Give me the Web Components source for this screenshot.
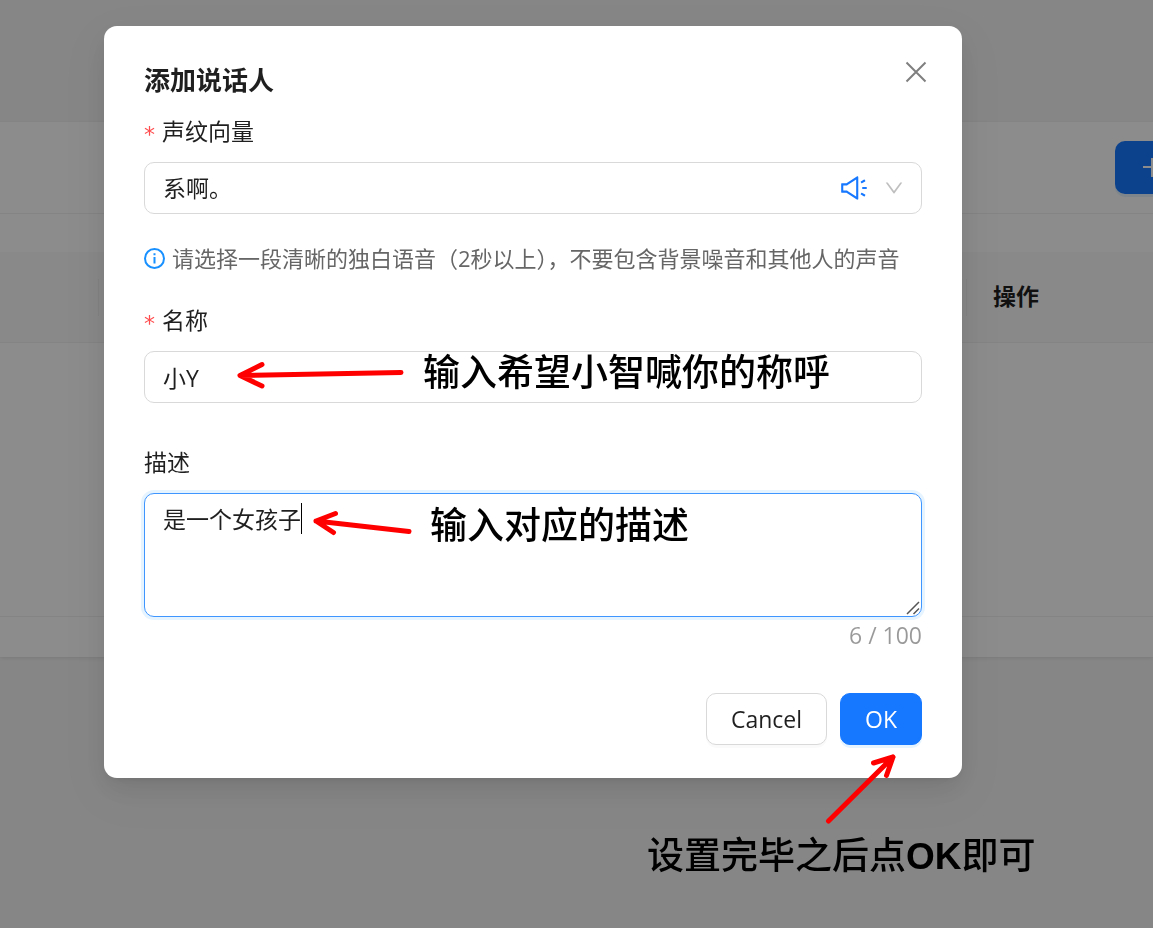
<!DOCTYPE html>
<html lang="zh-CN">
<head>
<meta charset="utf-8">
<meta name="viewport" content="width=device-width, initial-scale=1">
<title>添加说话人</title>
<style>
  html, body {
    height: 100%;
    margin: 0;
  }
  body {
    position: relative;
    overflow: hidden;
    background: #f5f5f5;
    color: rgba(0, 0, 0, 0.88);
    font-family: "Open Sans", "Noto Sans CJK SC", sans-serif;
    font-size: 23px;
    line-height: 36px;
  }
</style>
</head>
<body>
<speaker-page></speaker-page>

<modal-dialog heading="添加说话人">
  <voice-select label="声纹向量" value="系啊。"></voice-select>
  <hint-line>请选择一段清晰的独白语音（2秒以上），不要包含背景噪音和其他人的声音</hint-line>
  <text-field label="名称" value="小Y"></text-field>
  <text-area-field label="描述" value="是一个女孩子" max="100"></text-area-field>
  <action-button slot="footer">Cancel</action-button>
  <action-button slot="footer" primary>OK</action-button>
</modal-dialog>

<note-layer></note-layer>

<script>
const resetStyles = `
  *, *::before, *::after { box-sizing: border-box; }
  button, input, select, textarea {
    margin: 0;
    font: inherit;
    color: inherit;
  }
  svg { display: block; }
`;

const fieldStyles = `
  ${resetStyles}
  :host { display: block; }
  .label {
    display: flex;
    height: 36px;
    margin-bottom: 13px;
  }
  .star {
    width: 18px;
    color: #ff4d4f;
    font-family: "DejaVu Sans", sans-serif;
    font-size: 22px;
    line-height: 44px;
  }
  .box {
    display: flex;
    align-items: center;
    width: 100%;
    height: 52px;
    padding: 0 16px 0 18px;
    border: 1px solid #d9d9d9;
    border-radius: 10px;
    background: #fff;
  }
`;

// page behind the dialog
class SpeakerPage extends HTMLElement {
  constructor() {
    super();
    this.attachShadow({ mode: "open" });
  }

  connectedCallback() {
    this.shadowRoot.innerHTML = `
      <style>
        ${resetStyles}
        :host {
          display: block;
          padding: 122px 0 10px;
          overflow: hidden;
        }
        section {
          padding-bottom: 40px;
          background: #fff;
          box-shadow: 0 2px 4px rgba(0, 0, 0, 0.06), 0 0 2px rgba(0, 0, 0, 0.06);
        }
        header {
          display: flex;
          justify-content: flex-end;
          padding: 19px 0;
          border-bottom: 1px solid #f0f0f0;
        }
        button {
          width: 38px;
          height: 53px;
          padding: 0 0 0 26px;
          border: 0;
          border-radius: 10px 0 0 10px;
          overflow: hidden;
          background: #1677ff;
          color: #fff;
          box-shadow: 0 3px 0 rgba(5, 145, 255, 0.1);
        }
        table {
          width: 100%;
          margin-top: 38px;
          border-collapse: separate;
          border-spacing: 0;
          table-layout: fixed;
        }
        .first { width: 99px; }
        .last { width: 186px; }
        th {
          height: 91px;
          padding: 0 26px 3px;
          border-bottom: 1px solid #f0f0f0;
          background: #fafafa;
          text-align: left;
          font-weight: 700;
        }
        th:not(:last-child) {
          background: linear-gradient(#f0f0f0, #f0f0f0) right center / 1px 37px no-repeat #fafafa;
        }
        td {
          height: 274px;
          border-bottom: 1px solid #f0f0f0;
        }
      </style>
      <section>
        <header>
          <button type="button" aria-label="add">
            <svg width="12" height="23" viewBox="0 0 12 23" fill="none" stroke="currentColor" stroke-width="2">
              <path d="M11 2v19M2 11h10"/>
            </svg>
          </button>
        </header>
        <table>
          <colgroup><col class="first"><col><col class="last"></colgroup>
          <thead><tr><th></th><th></th><th>操作</th></tr></thead>
          <tbody><tr><td></td><td></td><td></td></tr></tbody>
        </table>
      </section>
    `;
  }
}

class ModalDialog extends HTMLElement {
  constructor() {
    super();
    this.attachShadow({ mode: "open" });
  }

  connectedCallback() {
    const heading = this.getAttribute("heading") || "";
    this.shadowRoot.innerHTML = `
      <style>
        ${resetStyles}
        :host {
          display: block;
          position: fixed;
          inset: 0;
          padding: 26px 191px 26px 104px;
          background: rgba(0, 0, 0, 0.45);
        }
        .panel {
          padding: 34px 40px 33px;
          border-radius: 13px;
          background: #fff;
          box-shadow: 0 10px 26px rgba(0, 0, 0, 0.08), 0 5px 10px -6px rgba(0, 0, 0, 0.12), 0 15px 46px 13px rgba(0, 0, 0, 0.05);
        }
        header {
          display: flex;
          justify-content: space-between;
          align-items: flex-start;
          margin-bottom: 13px;
        }
        h1 {
          margin: 0;
          font-size: 26px;
          line-height: 40px;
          font-weight: 700;
        }
        .close {
          margin-right: -6px;
          padding: 0;
          border: 0;
          background: none;
          color: rgba(0, 0, 0, 0.5);
        }
        footer {
          display: flex;
          justify-content: flex-end;
          gap: 13px;
          margin-top: 40px;
        }
      </style>
      <div class="panel" role="dialog" aria-labelledby="heading">
        <header>
          <h1 id="heading">${heading}</h1>
          <button class="close" type="button" aria-label="Close">
            <svg width="24" height="24" viewBox="0 0 24 24" fill="none" stroke="currentColor" stroke-width="2">
              <path d="M2.500 2.500l19 19M21.500 2.500l-19 19"/>
            </svg>
          </button>
        </header>
        <slot></slot>
        <footer><slot name="footer"></slot></footer>
      </div>
    `;
  }
}

class VoiceSelect extends HTMLElement {
  constructor() {
    super();
    this.attachShadow({ mode: "open" });
  }

  connectedCallback() {
    const label = this.getAttribute("label") || "";
    const value = this.getAttribute("value") || "";
    this.shadowRoot.innerHTML = `
      <style>
        ${fieldStyles}
        select {
          flex: 1;
          min-width: 0;
          height: 36px;
          padding: 0;
          border: 0;
          outline: 0;
          background: none;
          appearance: none;
        }
        button {
          margin-right: 14px;
          padding: 0;
          border: 0;
          background: none;
          color: #1677ff;
        }
        .arrow { color: rgba(0, 0, 0, 0.25); }
      </style>
      <label class="label" for="voice"><span class="star">*</span>${label}</label>
      <div class="box">
        <select id="voice"><option>${value}</option></select>
        <button type="button" aria-label="play">
          <svg width="30" height="30" viewBox="0 0 1024 1024" fill="currentColor">
            <path d="M625.900 115c-5.900 0-11.900 1.600-17.400 5.300L254 352H90c-8.800 0-16 7.200-16 16v288c0 8.800 7.200 16 16 16h164l354.500 231.700c5.500 3.600 11.600 5.300 17.400 5.300 16.700 0 32.100-13.300 32.100-32.100V147.100c0-18.800-15.400-32.100-32.100-32.100zM586 803L293.400 611.700l-18-11.700H146V424h129.400l17.900-11.700L586 221v582zm348-327H806c-8.800 0-16 7.200-16 16v40c0 8.800 7.200 16 16 16h128c8.800 0 16-7.200 16-16v-40c0-8.800-7.200-16-16-16zm-41.900 261.800l-110.300-63.700a15.900 15.900 0 0 0-21.700 5.900l-19.900 34.500c-4.400 7.600-1.800 17.400 5.800 21.800L856.300 800a15.900 15.900 0 0 0 21.700-5.900l19.900-34.500c4.400-7.600 1.700-17.400-5.800-21.800zM760 344a15.900 15.900 0 0 0 21.700 5.900L892 286.200c7.600-4.400 10.200-14.200 5.800-21.800L878 230a15.900 15.900 0 0 0-21.700-5.900L746 287.800a15.900 15.900 0 0 0-5.800 21.800L760 344z"/>
          </svg>
        </button>
        <svg class="arrow" width="22" height="22" viewBox="0 0 1024 1024" fill="currentColor">
          <path d="M884 256h-75c-5.100 0-9.900 2.500-12.900 6.600L512 654.200 227.900 262.600c-3-4.100-7.800-6.600-12.900-6.600h-75c-6.500 0-10.300 7.400-6.500 12.700l352.600 486.100c12.800 17.600 39 17.600 51.700 0l352.600-486.100c3.900-5.300.1-12.700-6.400-12.700z"/>
        </svg>
      </div>
    `;
  }
}

class HintLine extends HTMLElement {
  constructor() {
    super();
    this.attachShadow({ mode: "open" });
  }

  connectedCallback() {
    this.shadowRoot.innerHTML = `
      <style>
        ${resetStyles}
        :host {
          display: flex;
          align-items: center;
          gap: 7px;
          margin: 26px 0;
          color: #666;
          font-size: 22px;
        }
        svg { flex: none; }
      </style>
      <svg width="21" height="21" viewBox="0 0 21 21" fill="none" stroke="#1890ff" stroke-width="2">
        <circle cx="10.500" cy="10.500" r="9.500"/>
        <path d="M10.500 9v6.500M10.500 5.200v2"/>
      </svg>
      <span><slot></slot></span>
    `;
  }
}

class TextField extends HTMLElement {
  constructor() {
    super();
    this.attachShadow({ mode: "open" });
  }

  connectedCallback() {
    const label = this.getAttribute("label") || "";
    const value = this.getAttribute("value") || "";
    this.shadowRoot.innerHTML = `
      <style>
        ${fieldStyles}
        :host { margin-bottom: 41px; }
      </style>
      <label class="label" for="name"><span class="star">*</span>${label}</label>
      <input class="box" id="name" type="text" value="${value}">
    `;
  }
}

class TextAreaField extends HTMLElement {
  constructor() {
    super();
    this.attachShadow({ mode: "open" });
  }

  connectedCallback() {
    const label = this.getAttribute("label") || "";
    const value = this.getAttribute("value") || "";
    const max = this.getAttribute("max") || "";
    this.shadowRoot.innerHTML = `
      <style>
        ${fieldStyles}
        .area { position: relative; }
        textarea.box {
          display: block;
          height: 124px;
          padding: 7px 18px;
          border-color: #4096ff;
          outline: 0;
          box-shadow: 0 0 0 3px rgba(5, 145, 255, 0.1);
          resize: none;
        }
        .grip {
          position: absolute;
          right: 2px;
          bottom: 2px;
        }
        .caret {
          position: absolute;
          top: 10px;
          left: calc(19px + ${value.length}em);
          width: 1px;
          height: 31px;
          background: #000;
        }
        .caret[hidden] { display: none; }
        .count {
          color: rgba(0, 0, 0, 0.4);
          text-align: right;
        }
      </style>
      <label class="label" for="desc">${label}</label>
      <div class="area">
        <textarea class="box" id="desc" maxlength="${max}">${value}</textarea>
        <span class="caret"></span>
        <svg class="grip" width="14" height="14" viewBox="0 0 14 14" fill="none" stroke="#555" stroke-width="1.500">
          <path d="M1 13L13 1M7.500 13L13 7.500"/>
        </svg>
      </div>
      <div class="count">${value.length} / ${max}</div>
    `;
    const textarea = this.shadowRoot.querySelector("textarea");
    textarea.addEventListener("input", this._onInput.bind(this));
  }

  _onInput(event) {
    const count = this.shadowRoot.querySelector(".count");
    count.textContent = `${event.target.value.length} / ${this.getAttribute("max")}`;
    this.shadowRoot.querySelector(".caret").hidden = true;
  }
}

class ActionButton extends HTMLElement {
  constructor() {
    super();
    this.attachShadow({ mode: "open" });
  }

  connectedCallback() {
    this.shadowRoot.innerHTML = `
      <style>
        ${resetStyles}
        :host { display: block; }
        button {
          height: 52px;
          padding: 0 24px;
          border: 1px solid #d9d9d9;
          border-radius: 10px;
          background: #fff;
          box-shadow: 0 3px 0 rgba(0, 0, 0, 0.02);
        }
        :host([primary]) button {
          border-color: #1677ff;
          background: #1677ff;
          color: #fff;
          box-shadow: 0 3px 0 rgba(5, 145, 255, 0.1);
        }
      </style>
      <button type="button"><slot></slot></button>
    `;
  }
}

// notes and arrows, placed freely on top of everything
class NoteLayer extends HTMLElement {
  constructor() {
    super();
    this.attachShadow({ mode: "open" });
  }

  connectedCallback() {
    this.shadowRoot.innerHTML = `
      <style>
        ${resetStyles}
        :host {
          display: block;
          position: absolute;
          inset: 0;
          overflow: hidden;
          pointer-events: none;
          color: #000;
          font-family: "Liberation Sans", "Noto Sans CJK SC", sans-serif;
          font-size: 37px;
          line-height: 48px;
          font-weight: 500;
        }
        p {
          position: absolute;
          margin: 0;
          white-space: nowrap;
        }
        .name { left: 423px; top: 350px; }
        .desc { left: 430px; top: 503px; }
        .done { left: 647px; top: 833px; }
        b { font-weight: 700; }
      </style>
      <svg width="100%" height="100%" fill="none" stroke="#f00" stroke-width="5" stroke-linecap="round" stroke-linejoin="round">
        <path d="M401 372.500L240 375.500M262 364.500L240 375.500L262 386"/>
        <path d="M409 531.500L316 521M335.500 513.500L316 521L333.500 532.500"/>
        <path d="M828.500 821L893 757M873.500 763L893 757L886.500 775.500"/>
      </svg>
      <p class="name">输入希望小智喊你的称呼</p>
      <p class="desc">输入对应的描述</p>
      <p class="done">设置完毕之后点<b>OK</b>即可</p>
    `;
  }
}

customElements.define("speaker-page", SpeakerPage);
customElements.define("modal-dialog", ModalDialog);
customElements.define("voice-select", VoiceSelect);
customElements.define("hint-line", HintLine);
customElements.define("text-field", TextField);
customElements.define("text-area-field", TextAreaField);
customElements.define("action-button", ActionButton);
customElements.define("note-layer", NoteLayer);
</script>
</body>
</html>
